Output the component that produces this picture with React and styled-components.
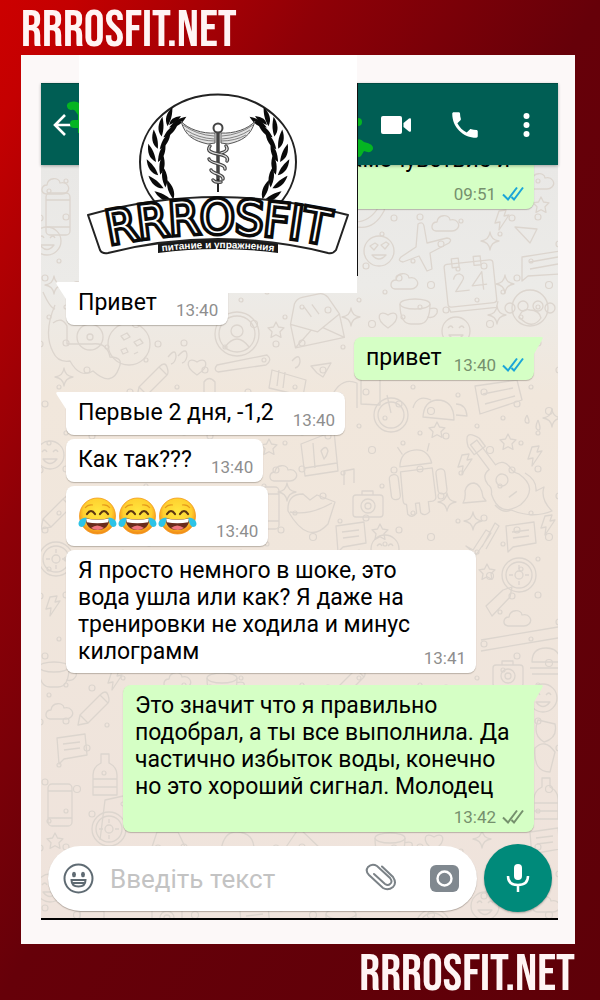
import React from "react";
import styled, { createGlobalStyle } from "styled-components";

const Global = createGlobalStyle`
  * { box-sizing: border-box; }
  body { margin: 0; font-family: Roboto, "Liberation Sans", sans-serif; }
  button { border: 0; padding: 0; background: none; cursor: pointer; display: flex; align-items: center; justify-content: center; flex: none; }
  svg { display: block; }
`;

const Page = styled.div`
  min-height: 100vh;
  padding: 0 25px 0 21px;
  background: linear-gradient(121deg, #cc0000 0%, #c40001 6%, #8e0007 27%, #660009 50%, #5e0008 100%);
`;

const Brand = styled.div`
  height: ${(p) => (p.$end ? 56 : 55)}px;
  display: flex;
  align-items: center;
  justify-content: ${(p) => (p.$end ? "flex-end" : "flex-start")};
  font-family: "Bebas Neue", "Oswald", "Roboto Condensed", "Liberation Sans Narrow", "Liberation Sans", sans-serif;
  font-size: 52px;
  line-height: 50px;
  padding-top: 6px;
  color: #fff4f4;
`;

const Card = styled.main`
  position: relative;
  background: #fcf8f8;
  padding: 28px 17px 24px 20px;
`;

const Phone = styled.section`
  border-bottom: 2px solid #000;
`;

const TopBar = styled.header`
  position: relative;
  z-index: 2;
  height: 82px;
  padding: 0 24px 0 8px;
  display: flex;
  align-items: center;
  background: #005e54;
  border-top: 1px solid #004c43;
  box-shadow: 0 1px 3px rgba(0, 0, 0, 0.3);
`;

const Actions = styled.div`
  margin-left: auto;
  display: flex;
  align-items: center;
  gap: 37px;
`;

const Scribble = styled.svg`
  position: absolute;
  top: 0;
  left: ${(p) => p.$left}px;
`;

const LogoPanel = styled.div`
  position: absolute;
  z-index: 3;
  top: 0;
  left: 58px;
  width: 278px;
  height: 238px;
  background: #fff;
`;

const LogoEdge = styled.div`
  position: absolute;
  top: 28px;
  left: 278px;
  width: 1px;
  height: 193px;
  background: #111;
`;

const Conversation = styled.div`
  position: relative;
  overflow: hidden;
  background: linear-gradient(#e9e8e6 0, #ecebe8 120px, #f1e7dc 230px, #f0e6dc 400px, #efe3dc 100%);
`;

const Wallpaper = styled.svg`
  position: absolute;
  top: 0;
  left: 0;
  width: 100%;
  height: 100%;
`;

const Messages = styled.div`
  position: relative;
  display: flex;
  flex-direction: column;
  padding: 0 24px 0 25px;
`;

const Bubble = styled.article`
  position: relative;
  display: flex;
  flex-direction: ${(p) => (p.$stacked ? "column" : "row")};
  align-items: flex-end;
  justify-content: space-between;
  gap: ${(p) => (p.$stacked ? 7 : p.$mine || p.$width ? 12 : 19)}px;
  align-self: ${(p) => (p.$mine ? "flex-end" : "flex-start")};
  width: ${(p) => (p.$width ? p.$width + "px" : "auto")};
  max-width: 100%;
  min-height: ${(p) => p.$min || 43}px;
  margin-top: ${(p) => p.$top}px;
  padding: 7px 10px 5px 12px;
  border-radius: 8px;
  background: ${(p) => (p.$mine ? "#d5ffc5" : "#fff")};
  box-shadow: 0 1px 1px rgba(90, 80, 70, 0.35);
`;

const Tail = styled.svg`
  position: absolute;
  top: 0;
  ${(p) => (p.$mine ? "right: -9px;" : "left: -10px;")}
`;

const Body = styled.p`
  margin: 0 0 ${(p) => (p.$stacked ? 0 : 3)}px;
  align-self: ${(p) => (p.$emoji ? "center" : "flex-start")};
  display: ${(p) => (p.$emoji ? "flex" : "block")};
  gap: 1px;
  font-size: 23px;
  line-height: 27px;
  white-space: nowrap;
  color: #000;
`;

const Meta = styled.div`
  display: flex;
  align-items: center;
  gap: 6px;
  font-size: 17px;
  line-height: 20px;
  color: ${(p) => (p.$mine ? "#75906d" : "#8e8e8e")};
`;

const Composer = styled.form`
  position: relative;
  display: flex;
  align-items: center;
  gap: 7px;
  padding: 12px 6px 6px 7px;
`;

const Field = styled.div`
  flex: 1;
  min-width: 0;
  height: 65px;
  display: flex;
  align-items: center;
  padding: 0 18px 0 15px;
  border-radius: 33px;
  background: #fff;
  box-shadow: 0 1px 1px rgba(90, 80, 70, 0.4);
`;

const Input = styled.input`
  flex: 1;
  min-width: 0;
  margin-left: 16px;
  border: 0;
  outline: 0;
  padding: 2px 0 0;
  background: none;
  font: 26px/30px Roboto, "Liberation Sans", sans-serif;
  color: #222;
  &::placeholder { color: #c3c3c3; opacity: 1; }
`;

const FieldActions = styled.div`
  display: flex;
  align-items: center;
  gap: 33px;
`;

const MicButton = styled.button`
  width: 68px;
  height: 68px;
  border-radius: 50%;
  background: #008a7a;
  box-shadow: 0 1px 2px rgba(0, 0, 0, 0.3);
`;

const Ticks = ({ color }) => (
  <svg width="22" height="16" viewBox="0 0 22 16" fill="none" stroke={color} strokeWidth="2">
    <path d="M1 8.500l5 5L15 1.500M9.500 11l2.500 2.500L21 1.500" />
  </svg>
);

const Laugh = () => (
  <svg width="39" height="38" viewBox="0 0 39 38" role="img" aria-label="😂">
    <defs>
      <radialGradient id="face" cx="50%" cy="40%" r="60%">
        <stop offset="0" stopColor="#ffe83f" />
        <stop offset="0.65" stopColor="#ffd02f" />
        <stop offset="1" stopColor="#f08314" />
      </radialGradient>
    </defs>
    <circle cx="19.500" cy="19" r="18" fill="url(#face)" stroke="#f39a20" strokeWidth="0.800" />
    <path d="M7 11q3-4 8-3M32 11q-3-4-8-3" fill="none" stroke="#e59a1d" strokeWidth="1.200" />
    <path d="M9 17q4-6 8 0M22 17q4-6 8 0" fill="none" stroke="#5b3510" strokeWidth="2.200" strokeLinecap="round" />
    <path d="M7.500 21q12 3 24 0Q31 33 19.500 33T7.500 21z" fill="#6a2c1c" />
    <path d="M8 21.500q11.500 2.500 23 0l-.8 3.800q-10.700 2-21.400 0z" fill="#fff" />
    <path d="M13 31q6-5 13 0-6 4-13 0z" fill="#f0777d" />
    <path d="M8.500 20.500C3 21 .5 24 .5 27q.3 3 3.500 3 4-.5 4.500-9.500zM30.500 20.500C36 21 38.500 24 38.500 27q-.3 3-3.500 3-4-.5-4.500-9.500z" fill="#2cc3e6" />
  </svg>
);

const stem = [
  [90, 71, 38],
  [84, 81, 26],
  [80, 93, 12],
  [78, 106, 1],
  [80, 119, -12],
  [85, 132, -26],
  [93, 144, -38],
];

const Branch = () => (
  <g fill="#0a0a0a">
    {stem.map(([x, y, r]) => (
      <g key={y} transform={`translate(${x} ${y}) rotate(${r})`}>
        <path d="M-1 1C-8-2-10-9-9-17-5-12-2-7-1 1z" />
        <path d="M1 1C1-7 3-13 8-18 9-10 7-3 1 1z" />
      </g>
    ))}
    <path d="M90 70q1-8 12-9-3 6-12 9z" />
  </g>
);

const Wing = () => (
  <g>
    <path d="M136 78C124 79 108 74 102 66c4 15 13 20 27 23l7-1z" fill="#e4e4e4" stroke="#555" strokeWidth="1" />
    <path d="M104 70q14 10 31 11M107 75q12 8 28 9M111 80q11 6 25 6" fill="none" stroke="#777" strokeWidth="0.900" />
  </g>
);

const Logo = () => (
  <svg width="278" height="238" viewBox="0 0 278 238" role="img" aria-label="RRROSFIT">
    <ellipse cx="139" cy="107" rx="78" ry="67.500" fill="none" stroke="#222" strokeWidth="2" />
    <Branch />
    <g transform="translate(278 0) scale(-1 1)"><Branch /></g>
    <Wing />
    <g transform="translate(278 0) scale(-1 1)"><Wing /></g>
    <path d="M139 78v50" stroke="#444" strokeWidth="3.500" />
    <path d="M139 124v13" stroke="#222" strokeWidth="2" />
    <circle cx="139" cy="73" r="4.500" fill="#fff" stroke="#444" strokeWidth="2" />
    <g fill="none" strokeLinecap="round">
      <path d="M131 91c-4 5 2 7 8 8s11 3 9 7M147 91c3 4-1 6-5 7M130 104c1 5 17 4 16 10M132 115c1 4 13 4 12 9M134 125q2 3 8 2" stroke="#444" strokeWidth="3.500" />
      <path d="M131 91c-4 5 2 7 8 8s11 3 9 7M147 91c3 4-1 6-5 7M130 104c1 5 17 4 16 10M132 115c1 4 13 4 12 9M134 125q2 3 8 2" stroke="#ddd" strokeWidth="1.200" />
    </g>
    <path d="M79 180h120v18q-60-8-120 0z" fill="#181818" />
    <path d="M9 160Q139 124 269 160L257 195q-3 4-8 3Q139 170 29 198q-6 1-8-3z" fill="#fff" stroke="#222" strokeWidth="2" strokeLinejoin="round" />
    <defs>
      <path id="name-arc" d="M16 192Q139 163 262 192" />
      <path id="tag-arc" d="M78 197Q139 189 200 197" />
    </defs>
    <text fontFamily="DejaVu Sans" fontWeight="200" fontSize="44" fill="#fff" stroke="#0a0a0a" strokeWidth="7" paintOrder="stroke" textAnchor="middle">
      <textPath href="#name-arc" startOffset="50%">RRROSFIT</textPath>
    </text>
    <text fontFamily="Liberation Sans" fontWeight="700" fontSize="10" fill="#fff" textAnchor="middle">
      <textPath href="#tag-arc" startOffset="50%">питание и упражнения</textPath>
    </text>
  </svg>
);

const Doodles = () => (
  <Wallpaper viewBox="41 165 517 753" preserveAspectRatio="xMinYMin slice" aria-hidden="true">
    <defs>
      <g id="star"><path d="M0-8l2.500 5 5.500.8-4 4 1 5.600L0 4.700l-5 2.700 1-5.600-4-4 5.500-.8z" /></g>
      <g id="spark"><path d="M0-9q1 8 9 9-8 1-9 9-1-8-9-9 8-1 9-9z" /></g>
      <g id="bolt"><path d="M-3-9l7-1-2 6 5-1L-3 10l1-8-5 1z" /></g>
      <g id="smile"><circle r="14" /><path d="M-8-3q3-4 5 0M3-3q3-4 5 0M-7 4q7 9 14 0z" /></g>
      <g id="cloud"><path d="M-12 7c-6-1-5-9 1-9 1-8 12-8 13-2 7-2 11 5 7 9q-2 2-5 2z" /></g>
      <g id="cup"><ellipse cy="-8" rx="15" ry="5" /><path d="M-15-8q0 20 11 20h8q11 0 11-20M14-3q10-3 8 4-3 6-10 4" /></g>
      <g id="cam"><rect x="-15" y="-10" width="30" height="22" rx="3" /><circle cy="1" r="7" /><circle cy="1" r="3" /><path d="M-6-10v-4H5v4" /></g>
      <g id="note"><path d="M-14-10l28-4 2 21-23 4-5 5z M-8-4l17-2M-7 2l16-2" /></g>
      <g id="pencil"><path d="M-14 8L6-12l8 8L-6 16l-10 2zM6-12q6-6 8 0t0 8M-14 8l8 8" /></g>
      <g id="heart"><path d="M0 8C-15-2-8-11 0-5 8-11 15-2 0 8z" /></g>
      <g id="flower"><circle r="4" /><circle r="13" /><circle r="17" /><path d="M-10 0h4M6 0h4M0-10v4M0 6v4" /></g>
      <g id="plane"><path d="M-3-26q5-3 6 2l3 17 20-5q6 1 2 5L9 3 11 19l-5 2-8-15-16 6q-6-1-2-5L-5-3z" /></g>
      <g id="phone"><rect x="-12" y="-21" width="24" height="42" rx="4" /><path d="M-12-14h24M-12 13h24" /></g>
      <g id="bottle"><path d="M-4-22h8v9q8 4 8 12v20h-24V-1q0-8 8-12zM-12 3h24M-12 11h24" /></g>
      <pattern id="scatter" width="118" height="126" patternUnits="userSpaceOnUse">
        <g fill="none" stroke="#dcd5ce" strokeWidth="1.200">
          <circle cx="12" cy="14" r="3" /><circle cx="31" cy="40" r="2" /><circle cx="59" cy="9" r="2" /><circle cx="77" cy="33" r="3.500" />
          <circle cx="104" cy="17" r="2" /><circle cx="92" cy="58" r="3" /><circle cx="18" cy="72" r="3.500" /><circle cx="49" cy="65" r="2" />
          <circle cx="66" cy="91" r="3" /><circle cx="107" cy="95" r="2" /><circle cx="28" cy="108" r="2" /><circle cx="87" cy="118" r="3" />
          <circle cx="5" cy="48" r="2" /><circle cx="45" cy="26" r="3" /><circle cx="66" cy="55" r="2" /><circle cx="40" cy="92" r="3" />
        </g>
      </pattern>
    </defs>
    <rect x="41" y="165" width="700" height="1000" fill="url(#scatter)" />
    <g fill="none" stroke="#dcd5ce" strokeWidth="1.300" strokeLinejoin="round">
      <circle cx="379" cy="251" r="15" /><path d="M370 246l4 4 4-5-3-2zM381 245l4 4 4-5-3-2zM372 255q7 8 14 0z" />
      <use href="#plane" x="421" y="250" />
      <g transform="translate(470 284) rotate(-6)"><rect x="-24" y="-22" width="49" height="43" rx="3" /><path d="M-24 21l2 5h46l2-6M-16-27h7v9h-7zM6-27h7v9H6zM-16-6q2-6 7-5 6 3 1 8l-7 9h14M13 7v-18L2 2h15" /></g>
      <use href="#cup" x="415" y="312" /><use href="#smile" x="456" y="331" /><use href="#cloud" x="448" y="224" /><use href="#cloud" x="407" y="282" />
      <g transform="translate(530 308)"><circle r="18" /><circle cx="-20" r="5" /><circle cx="20" r="5" /><circle cx="-7" cy="-2" r="5" /><circle cx="8" cy="-2" r="5" /><path d="M-11 9q3-9 11-7 9 0 11 8-9 13-22-1z" /></g>
      <path d="M522 257l38-6v23l-32 2-6 5zM530 262l28-5M530 269l28-5M515 227l22 2-7 14zM355 222q14 0 23-14 8-4 6 3-10 19-27 16z" />
      <use href="#heart" x="388" y="320" /><use href="#spark" x="490" y="241" /><use href="#spark" x="497" y="315" /><use href="#spark" x="505" y="284" /><use href="#spark" x="351" y="317" />
      <use href="#bolt" x="502" y="220" /><use href="#cloud" x="543" y="182" /><use href="#star" x="541" y="205" /><use href="#smile" x="47" y="241" /><use href="#cloud" x="58" y="187" /><use href="#phone" x="58" y="214" />

      <g transform="translate(237 334)"><circle r="22" /><circle r="18" /><circle cy="-3" r="6" /><path d="M-12 13q12-16 24 0" /></g>
      <g transform="translate(316 324) rotate(-12)"><path d="M-25-5l8-19q3-5 9-5H9q5 0 8 5l8 19v24h-50zM-25-5L0 8 25-5M-25 19L-6 5M25 19L6 5M-8-19L-3-8M0-20l5 11" /></g>
      <g transform="translate(129 344)"><circle r="21" /><path d="M-8-8l6-3 3 4-6 3zM5-2l6-3 3 4-6 3zM-8 6l5-2 2 4-5 2zM5 10l4-2" /></g>
      <circle cx="90" cy="337" r="13" /><circle cx="90" cy="337" r="3" />
      <path d="M55 305q-12 28-2 47 5 11 17 9 10 18 23 10 19 17 26-3 5-11-9-11-3-15-18-13H67V326q-5-10-14-3M43 292q7 16 12 17M217 365l50-10q6 5-1 10l-48 7q-5-2-1-7zM311 366l20-3-8 14-6-4zM272 370l34 10-3 16-34-8zM279 370l-2 16M285 372l-2 16" />
      <use href="#pencil" x="153" y="379" /><use href="#heart" x="197" y="367" /><use href="#star" x="276" y="330" /><use href="#spark" x="64" y="377" /><use href="#spark" x="54" y="285" />
      <path d="M168 357q8-10 8 0-1 6-5 7M178 356q9-10 9 0-1 6-5 7M292 361q8-9 8 1-1 5-5 6M204 396v-14q5-7 11 0v14M330 400q10-24 27-17v25" />

      <g transform="translate(391 415)"><circle r="17" /><circle r="13" /><path d="M-4-20L0-2" /></g>
      <path d="M423 417q1-16 14-17 17 0 17 20zM413 408q4-14 18-8M456 404q10 0 11 12l-11-1M475 386l42-6 5 20-42 14zM483 394l30-6M485 404l30-8M361 380q4-14 10-14t9 14v25l-19-1z" />
      <g transform="translate(416 475) rotate(-7)"><path d="M-15-10q2-15 16-15t16 15zM-11-22l-4-8M14-22l3-8M-15-5h32v29q0 4-5 4h-3v10q-5 5-9 0V28h-4v10q-5 5-9 0V28q-3 0-3-4z" /><rect x="-27" y="-3" width="9" height="25" rx="4" /><rect x="20" y="-3" width="9" height="25" rx="4" /></g>
      <g transform="translate(502 480) rotate(-37)"><path d="M-4-47h8v31q10 0 10 11-1 5 3 10 8 24-17 26-25-2-17-26 5-5 3-10 0-11 10-11zM-7-47q7-18 14 0v10h-14z" /><circle cy="0" r="6" /><path d="M-5 18H5" /></g>
      <path d="M525 473q12 7 11 18l8-4q-4 12 8 24-19 8-41-1-8 4-16-5" />
      <use href="#cam" x="368" y="505" /><use href="#note" x="520" y="536" /><use href="#star" x="508" y="442" /><use href="#star" x="437" y="430" /><use href="#star" x="380" y="532" /><use href="#bolt" x="465" y="464" /><use href="#bolt" x="535" y="456" /><use href="#bolt" x="548" y="525" />
      <path d="M463 503q3-5 2-12 2-8 9-8 7 1 9 14l3 4zM466 546l7 4 13-20 5 3-15 22zM482 547l13-24 4 3-13 23M527 415q-4 7 0 8t0-8M538 420q-4 9 0 10t0-10" />
      <use href="#spark" x="473" y="521" /><use href="#spark" x="447" y="502" /><use href="#spark" x="552" y="418" /><use href="#flower" x="519" y="575" /><use href="#smile" x="385" y="549" /><use href="#note" x="350" y="536" />
      <path d="M301 444l4 32 33-5-4-40zM305 468l32-5M313 443l2 25M321 451q5-7 7 0-1 5-4 8zM288 511q-1-17 15-17l7 6 7-5 18 7-7 22q-20 22-40-13zM290 512q19 4 42-9M344 485v-14l10-2v14" />
      <use href="#cloud" x="286" y="474" /><use href="#spark" x="287" y="492" /><use href="#star" x="269" y="447" /><use href="#phone" x="267" y="508" /><use href="#smile" x="50" y="455" /><use href="#pencil" x="57" y="511" /><use href="#flower" x="56" y="559" /><use href="#bolt" x="53" y="606" /><use href="#cup" x="54" y="675" />

      <path d="M481 640l77-13M481 651l77-13M486 606l17-16 9-3-2 10-18 19zM532 662q0-14 14-14t14 14zM530 668h30M532 674h28" />
      <use href="#cloud" x="520" y="619" /><use href="#star" x="487" y="572" /><use href="#cam" x="508" y="675" /><use href="#smile" x="543" y="698" /><use href="#pencil" x="94" y="707" /><use href="#note" x="71" y="748" /><use href="#bottle" x="105" y="776" /><use href="#phone" x="60" y="805" /><use href="#star" x="55" y="841" /><use href="#flower" x="109" y="829" />
      <path d="M538 720q-6 15 6 22 14-4 11-18zM535 748q10-10 20 4l-5 20q-17 0-15-24zM100 840l5-40 32-7M151 850l6-18h21l9 19M221 850q3-18 15-18 19 0 18 20M284 850l15-22 24 23" />
      <use href="#bolt" x="115" y="680" /><use href="#cloud" x="62" y="712" /><use href="#cloud" x="180" y="681" /><use href="#pencil" x="350" y="681" /><use href="#cup" x="222" y="686" /><use href="#bottle" x="546" y="800" /><use href="#note" x="544" y="842" /><use href="#smile" x="50" y="888" /><use href="#spark" x="482" y="839" /><use href="#heart" x="434" y="842" /><use href="#cup" x="390" y="846" />
      <use href="#smile" x="485" y="906" /><use href="#cloud" x="549" y="905" /><use href="#phone" x="92" y="925" /><use href="#cam" x="167" y="917" /><use href="#note" x="254" y="920" /><use href="#cup" x="341" y="922" /><use href="#flower" x="433" y="926" />
    </g>
  </Wallpaper>
);

function Message({ mine, top, width, min, stacked, tail, time, ticks, lines, children }) {
  return (
    <Bubble $mine={mine} $top={top} $width={width} $min={min} $stacked={stacked}>
      {tail && (
        <Tail $mine={mine} width="20" height="20" viewBox="0 0 20 20">
          <path d={mine ? "M0 0H18q3 0 1 3L11 17V20H0z" : "M20 0H2Q-1 0 1 3l9 14v3h10z"} fill={mine ? "#d5ffc5" : "#fff"} />
        </Tail>
      )}
      <Body $emoji={!!children} $stacked={stacked}>
        {children || lines.map((l, i) => <React.Fragment key={l}>{i > 0 && <br />}{l}</React.Fragment>)}
      </Body>
      <Meta $mine={mine}>
        <time>{time}</time>
        {ticks && <Ticks color={ticks} />}
      </Meta>
    </Bubble>
  );
}

export default function App() {
  return (
    <Page>
      <Global />
      <Brand>RRROSFIT.NET</Brand>
      <Card>
        <LogoPanel>
          <Logo />
          <LogoEdge />
        </LogoPanel>
        <Phone>
          <TopBar>
            <button type="button" aria-label="Назад">
              <svg width="26" height="26" viewBox="0 0 26 26" fill="none" stroke="#fff" strokeWidth="2.600">
                <path d="M25 13H6M16 3L6 13l10 10" />
              </svg>
            </button>
            <Scribble $left={24} width="16" height="60" viewBox="0 0 16 60">
              <path d="M6 22q6-2 9 5M9 40h6" stroke="#05b522" strokeWidth="8" strokeLinecap="round" fill="none" />
              <path d="M13 24v25h3V20z" fill="#05b522" />
            </Scribble>
            <Scribble $left={316} width="20" height="82" viewBox="0 0 20 82">
              <circle cx="1" cy="38" r="4" fill="#05b522" />
              <path d="M0 56q3-2 7 2 10 2 9 7-2 5-9 2l-3 5q-2 2-4 0z" fill="#05b522" />
            </Scribble>
            <Actions>
              <button type="button" aria-label="Видеозвонок">
                <svg width="30" height="20" viewBox="0 0 30 20" fill="#fff">
                  <rect x="0" y="1" width="21" height="18" rx="2" />
                  <path d="M22.500 8L28 3.500q2-1 2 1v11q0 2-2 1L22.500 12z" />
                </svg>
              </button>
              <button type="button" aria-label="Позвонить">
                <svg width="34" height="34" viewBox="0 0 24 24" fill="#fff">
                  <path d="M6.620 10.790c1.440 2.830 3.760 5.150 6.590 6.590l2.200-2.200c.28-.28.67-.36 1.020-.25 1.120.37 2.320.57 3.570.57.550 0 1 .45 1 1V20c0 .55-.45 1-1 1C10.610 21 3 13.390 3 4c0-.55.45-1 1-1h3.500c.55 0 1 .45 1 1 0 1.250.2 2.450.57 3.570.11.35.03.74-.25 1.020z" />
                </svg>
              </button>
              <button type="button" aria-label="Меню">
                <svg width="15" height="26" viewBox="0 0 15 26" fill="#fff">
                  <circle cx="7.500" cy="4" r="3" /><circle cx="7.500" cy="13" r="3" /><circle cx="7.500" cy="22" r="3" />
                </svg>
              </button>
            </Actions>
          </TopBar>
          <Conversation>
            <Doodles />
            <Messages>
              <Message mine stacked top={-26} width={208} min={70} time="09:51" ticks="#1ba5d8" lines={["самочувствие и"]} />
              <Message top={73} tail time="13:40" lines={["Привет"]} />
              <Message mine top={12} tail time="13:40" ticks="#1ba5d8" lines={["привет"]} />
              <Message top={12} tail time="13:40" lines={["Первые 2 дня, -1,2"]} />
              <Message top={4} time="13:40" lines={["Как так???"]} />
              <Message top={4} min={60} time="13:40"><Laugh /><Laugh /><Laugh /></Message>
              <Message top={4} width={410} time="13:41" lines={["Я просто немного в шоке, это", "вода ушла или как? Я даже на", "тренировки не ходила и минус", "килограмм"]} />
              <Message mine stacked top={12} tail width={411} time="13:42" ticks="#75906d" lines={["Это значит что я правильно", "подобрал, а ты все выполнила. Да", "частично избыток воды, конечно", "но это хороший сигнал. Молодец"]} />
            </Messages>
            <Composer onSubmit={(e) => e.preventDefault()}>
              <Field>
                <button type="button" aria-label="Смайлики">
                  <svg width="31" height="31" viewBox="0 0 31 31" fill="none" stroke="#5f6b73" strokeWidth="2">
                    <circle cx="15.500" cy="15.500" r="14" />
                    <path d="M8.500 17h14q0 6.500-7 6.500t-7-6.500zM10 20h11" />
                    <ellipse cx="11" cy="11.500" rx="1" ry="1.700" /><ellipse cx="20" cy="11.500" rx="1" ry="1.700" />
                  </svg>
                </button>
                <Input aria-label="Введіть текст" placeholder="Введіть текст" />
                <FieldActions>
                  <button type="button" aria-label="Прикріпити">
                    <svg width="32" height="30" viewBox="0 0 32 30" fill="none" stroke="#7b8287" strokeWidth="2" strokeLinecap="round">
                      <path d="M17 3.500L28 14q4 6 0 10-5 4-10 1L4 12Q0 8 3 4q4-4 9-1L25 15q3 4 0 6-2 2-5 0L9 11" />
                    </svg>
                  </button>
                  <button type="button" aria-label="Камера">
                    <svg width="29" height="29" viewBox="0 0 29 29">
                      <rect x="0" y="1" width="29" height="27" rx="6" fill="#80888f" />
                      <circle cx="14.500" cy="14.500" r="7" fill="none" stroke="#fff" strokeWidth="2.400" />
                    </svg>
                  </button>
                </FieldActions>
              </Field>
              <MicButton type="button" aria-label="Голосове повідомлення">
                <svg width="24" height="30" viewBox="0 0 24 30" fill="none" stroke="#fff" strokeWidth="2.500">
                  <rect x="8" y="1" width="8" height="16" rx="4" fill="#fff" stroke="none" />
                  <path d="M2 13q0 9 10 9t10-9M12 22v7" />
                </svg>
              </MicButton>
            </Composer>
          </Conversation>
        </Phone>
      </Card>
      <Brand as="footer" $end>RRROSFIT.NET</Brand>
    </Page>
  );
}
